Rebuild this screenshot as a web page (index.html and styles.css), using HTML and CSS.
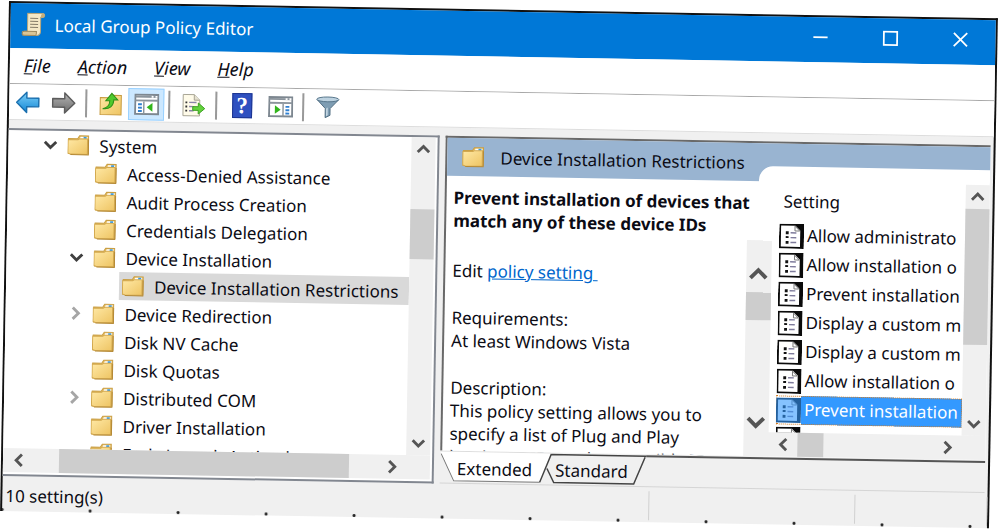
FILE: index.html
```html
<!DOCTYPE html>
<html lang="en">
<head>
  <meta charset="UTF-8" />
  <meta name="viewport" content="width=device-width, initial-scale=1.0"/>
  <title>Local Group Policy Editor</title>
  <link rel="stylesheet" href="styles.css">
</head>
<body>
  <svg class="sprite" aria-hidden="true">
    <defs>
      <linearGradient id="g-folder" x1="0" y1="0" x2="1" y2="1">
        <stop offset="0" stop-color="#ffe9a6"/><stop offset="1" stop-color="#eec463"/>
      </linearGradient>
      <linearGradient id="g-blue" x1="0" y1="0" x2="0" y2="1">
        <stop offset="0" stop-color="#7fd0f8"/><stop offset="1" stop-color="#1287d6"/>
      </linearGradient>
      <linearGradient id="g-gray" x1="0" y1="0" x2="0" y2="1">
        <stop offset="0" stop-color="#b5b5b5"/><stop offset="1" stop-color="#6a6a6a"/>
      </linearGradient>
    </defs>
    <symbol id="folder" viewBox="0 0 22 22">
      <path d="M1 4.5h9l2-3h9v18H1z" fill="#e6bd62" stroke="#c99f45"/>
      <path d="M13 2.500h7v2.500h-8z" fill="#fff"/>
      <path d="M16 2.500h3v2h-3z" fill="#3c9be0"/>
      <path d="M.5 5.500h10l1.500-1H20V20H3L.5 19z" fill="url(#g-folder)" stroke="#d3a94f"/>
      <path d="M3 20.500h18V5" fill="none" stroke="#b58a37"/>
    </symbol>
    <symbol id="arrow" viewBox="0 0 26 24">
      <path d="M1.500 12L12 1.500v6h12.500v9H12v6z" stroke-width="1.500" stroke-linejoin="round"/>
    </symbol>
    <symbol id="chev" viewBox="0 0 14 14">
      <path d="M2 4.500l5 5 5-5" fill="none" stroke="currentColor" stroke-width="2.500"/>
    </symbol>
    <symbol id="policy" viewBox="0 0 26 26">
      <path d="M0 0h26v26H0z" fill="#0a0a0a"/>
      <path d="M2 2h15l5 5v17H2z" fill="#fff"/>
      <path d="M16.500 2.500v5h5z" fill="#fff" stroke="#777"/>
      <path d="M7 8h3v3H7zM7 13h3v2H7zM7 18h3v3H7z" fill="#111"/>
      <path d="M12 9.500h6M12 14.500h6M12 19.500h6" stroke="#7f7c9c" stroke-width="1.500"/>
    </symbol>
  </svg>

  <main class="window">
    <header class="titlebar">
      <svg class="app-icon" viewBox="0 0 24 24" aria-hidden="true">
        <path d="M6 1h15c3 0 2 4 0 4h-2v14c0 3-2 4-4 4H3c-3 0-3-4 0-4h3z" fill="#f4e8c6" stroke="#b9a77c"/>
        <path d="M3 19h12c0 2 0 4-1 4H3c-3 0-3-4 0-4z" fill="#d9c596" stroke="#9c8a60"/>
        <path d="M19 5c0-2 1-4 2-4 3 0 2 4 0 4z" fill="#c3ae7c"/>
        <path d="M8.500 6h8M8.500 9h8M8.500 12h8M8.500 15h8" stroke="#857c68"/>
      </svg>
      <h1>Local Group Policy Editor</h1>
      <button class="win-btn" aria-label="Minimize"><svg viewBox="0 0 18 18"><path d="M1 9h16"/></svg></button>
      <button class="win-btn" aria-label="Maximize"><svg viewBox="0 0 18 18"><path d="M1.500 1.500h15v15h-15z"/></svg></button>
      <button class="win-btn" aria-label="Close"><svg viewBox="0 0 18 18"><path d="M1.500 1.500l15 15M16.500 1.500l-15 15"/></svg></button>
    </header>

    <nav class="menubar">
      <button><u>F</u>ile</button>
      <button><u>A</u>ction</button>
      <button><u>V</u>iew</button>
      <button><u>H</u>elp</button>
    </nav>

    <div class="toolbar">
      <button aria-label="Back"><svg class="back"><use href="#arrow"/></svg></button>
      <button aria-label="Forward"><svg class="forward"><use href="#arrow"/></svg></button>
      <span class="sep"></span>
      <button aria-label="Up one level">
        <svg viewBox="0 0 24 24">
          <path d="M1.500 6h9l2-2.500h10V23h-21z" fill="url(#g-folder)" stroke="#c79b40"/>
          <path d="M4 17c5-1 7-4 7-8H7l6-7.500L19 8h-4c0 6-4 10-11 9z" fill="#4fc92c" stroke="#2f8f18"/>
        </svg>
      </button>
      <button class="on" aria-label="Show console tree">
        <svg viewBox="0 0 26 24">
          <path d="M1 2h24v20H1z" fill="#fff" stroke="#7d8790" stroke-width="2"/>
          <path d="M1 4h24M1 8h24" stroke="#8b949c" stroke-width="2"/>
          <path d="M18 4h2M22 4h2" stroke="#fff" stroke-width="2"/>
          <path d="M10 9v13" stroke="#8b949c" stroke-width="1.500"/>
          <path d="M4 12h4M4 15.500h4M4 19h4" stroke="#2f7fd0" stroke-width="2"/>
          <path d="M19 10.500v9L13 15z" fill="#32b51c"/>
        </svg>
      </button>
      <span class="sep"></span>
      <button aria-label="Export list">
        <svg viewBox="0 0 26 26">
          <path d="M1.500 1.500h12l6 6v17h-18z" fill="#fffbe9" stroke="#a39f8f"/>
          <path d="M13.500 1.500v6h6" fill="#e6e2d0" stroke="#a39f8f"/>
          <path d="M4 10h2M4 14.500h2M4 19h2" stroke="#333" stroke-width="2"/>
          <path d="M8 10h8M8 14.500h5M8 19h5" stroke="#8a84a8" stroke-width="1.500"/>
          <path d="M12 14.500h6v-4l7 6-7 6v-4h-6z" fill="#62d13c" stroke="#369c1b"/>
        </svg>
      </button>
      <span class="sep"></span>
      <button class="help" aria-label="Help">?</button>
      <button aria-label="Show action pane">
        <svg viewBox="0 0 26 24">
          <path d="M1 2h24v20H1z" fill="#fff" stroke="#7d8790" stroke-width="2"/>
          <path d="M1 4h24M1 8h24" stroke="#8b949c" stroke-width="2"/>
          <path d="M18 4h2M22 4h2" stroke="#fff" stroke-width="2"/>
          <path d="M15.500 9v13" stroke="#8b949c" stroke-width="1.500"/>
          <path d="M18 12h4M18 15.500h4M18 19h4" stroke="#2f7fd0" stroke-width="2"/>
          <path d="M7 10.500v9l6-4.500z" fill="#32b51c"/>
        </svg>
      </button>
      <span class="sep"></span>
      <button aria-label="Filter">
        <svg viewBox="0 0 26 24">
          <path d="M2 4l8.500 9v9.500l5-2.500v-7L24 4z" fill="#7e9db3" stroke="#4e6b80"/>
          <path d="M11.500 13v8l1.500-1v-8z" fill="#cfe0ea"/>
          <ellipse cx="13" cy="3.500" rx="11.500" ry="2.500" fill="#bdd2e0" stroke="#557489"/>
        </svg>
      </button>
    </div>

    <div class="panes">
      <section class="tree-pane">
        <ul class="tree">
          <li><svg class="chev open"><use href="#chev"/></svg><svg class="folder"><use href="#folder"/></svg><span>System</span></li>
          <li class="l2"><svg class="folder"><use href="#folder"/></svg><span>Access-Denied Assistance</span></li>
          <li class="l2"><svg class="folder"><use href="#folder"/></svg><span>Audit Process Creation</span></li>
          <li class="l2"><svg class="folder"><use href="#folder"/></svg><span>Credentials Delegation</span></li>
          <li class="l2"><svg class="chev open"><use href="#chev"/></svg><svg class="folder"><use href="#folder"/></svg><span>Device Installation</span></li>
          <li class="l3"><div class="current"><svg class="folder"><use href="#folder"/></svg><span>Device Installation Restrictions</span></div></li>
          <li class="l2"><svg class="chev"><use href="#chev"/></svg><svg class="folder"><use href="#folder"/></svg><span>Device Redirection</span></li>
          <li class="l2"><svg class="folder"><use href="#folder"/></svg><span>Disk NV Cache</span></li>
          <li class="l2"><svg class="folder"><use href="#folder"/></svg><span>Disk Quotas</span></li>
          <li class="l2"><svg class="chev"><use href="#chev"/></svg><svg class="folder"><use href="#folder"/></svg><span>Distributed COM</span></li>
          <li class="l2"><svg class="folder"><use href="#folder"/></svg><span>Driver Installation</span></li>
          <li class="l2"><svg class="folder"><use href="#folder"/></svg><span>Early Launch Antimal</span></li>
        </ul>
        <div class="vbar tree-v">
          <button class="up" aria-label="Scroll up"><svg><use href="#chev"/></svg></button>
          <span class="thumb"></span>
          <button class="down" aria-label="Scroll down"><svg><use href="#chev"/></svg></button>
        </div>
        <div class="hbar tree-h">
          <button class="left" aria-label="Scroll left"><svg><use href="#chev"/></svg></button>
          <span class="thumb"></span>
          <button class="right" aria-label="Scroll right"><svg><use href="#chev"/></svg></button>
        </div>
      </section>

      <section class="detail">
        <div class="detail-view">
          <div class="detail-head">
            <svg class="folder"><use href="#folder"/></svg>
            <h2>Device Installation Restrictions</h2>
          </div>
          <div class="detail-body">
            <article class="desc">
              <h3>Prevent installation of devices that match any of these device IDs</h3>
              <p>Edit <a href="#">policy setting&nbsp;</a></p>
              <p>Requirements:<br>At least Windows Vista</p>
              <p>Description:<br>This policy setting allows you to specify a list of Plug and Play hardware IDs and compatible IDs</p>
            </article>
            <div class="vbar desc-v">
              <button class="up" aria-label="Scroll up"><svg><use href="#chev"/></svg></button>
              <span class="thumb"></span>
              <button class="down" aria-label="Scroll down"><svg><use href="#chev"/></svg></button>
            </div>
            <div class="list-box">
              <div class="list">
                <table>
                  <thead><tr><th>Setting</th></tr></thead>
                  <tbody>
                    <tr><td><svg><use href="#policy"/></svg><span>Allow administrato</span></td></tr>
                    <tr><td><svg><use href="#policy"/></svg><span>Allow installation o</span></td></tr>
                    <tr><td><svg><use href="#policy"/></svg><span>Prevent installation</span></td></tr>
                    <tr><td><svg><use href="#policy"/></svg><span>Display a custom m</span></td></tr>
                    <tr><td><svg><use href="#policy"/></svg><span>Display a custom m</span></td></tr>
                    <tr><td><svg><use href="#policy"/></svg><span>Allow installation o</span></td></tr>
                    <tr class="selected"><td><i><svg><use href="#policy"/></svg></i><span>Prevent installation</span></td></tr>
                    <tr><td><svg><use href="#policy"/></svg></td></tr>
                  </tbody>
                </table>
              </div>
              <div class="vbar list-v">
                <button class="up" aria-label="Scroll up"><svg><use href="#chev"/></svg></button>
                <span class="thumb"></span>
                <button class="down" aria-label="Scroll down"><svg><use href="#chev"/></svg></button>
              </div>
              <div class="hbar list-h">
                <button class="left" aria-label="Scroll left"><svg><use href="#chev"/></svg></button>
                <span class="thumb"></span>
                <button class="right" aria-label="Scroll right"><svg><use href="#chev"/></svg></button>
              </div>
            </div>
          </div>
        </div>
        <div class="tabs">
          <svg class="tab-shape" viewBox="0 0 206 32" aria-hidden="true">
            <path d="M0 0h112l-11 30H14L1 3z" fill="#fff"/>
            <path d="M0 .5h111" stroke="#ddd"/>
            <path d="M1 3l13 27h86" fill="none" stroke="#777"/>
            <path d="M100 30L111 2h95M107 16l7 14h80L205 3" fill="none" stroke="#444" stroke-width="1.500"/>
          </svg>
          <div class="tab-labels">
            <button>Extended</button>
            <button>Standard</button>
          </div>
          <span class="tab-line"></span>
        </div>
      </section>
    </div>

    <footer class="status">
      <span class="count">10 setting(s)</span>
      <span class="cell"></span>
      <span class="cell last"></span>
    </footer>
  </main>
</body>
</html>
```
FILE: styles.css
```css
* { box-sizing: border-box; }
body { display: flow-root; min-height: 100vh; margin: 0; background: #fff; color: #0b0b14; font-family: "Noto Sans", "Open Sans", sans-serif; font-size: 17px; overflow: hidden; }
button { border: 0; padding: 0; background: none; color: inherit; font: inherit; }
h1, h2, h3, p, ul { margin: 0; padding: 0; font-weight: normal; }
h1, h2 { font-size: 17px; }
.sprite { position: absolute; width: 0; height: 0; }

/* the whole window sits on the page with a slight tilt */
.window {
  display: flex;
  flex-direction: column;
  width: calc(100% - 11px);
  height: calc(100vh - 20px);
  margin: 1px 0 0 9px;
  border: 2px solid #111;
  border-bottom: 0;
  background: #f0f0f0;
  transform: rotate(1deg);
  transform-origin: 0 0;
}

.titlebar { display: flex; align-items: center; flex: 0 0 45px; background: #0078d7; color: #fff; padding: 0 0 3px 11px; }
.app-icon { width: 24px; height: 24px; margin-right: 9px; }
.titlebar h1 { flex: 1; }
.win-btn { width: 70px; height: 42px; }
.win-btn svg { width: 16px; height: 16px; fill: none; stroke: #fff; stroke-width: 2; }

.menubar { display: flex; gap: 27px; flex: 0 0 36px; align-items: center; padding: 0 0 2px 14px; background: #fff; border-bottom: 1px solid #a8a8a8; font-style: italic; font-size: 18px; }

.toolbar { display: flex; align-items: center; flex: 0 0 36px; background: #fff; border-bottom: 1px solid #ddd; }
.toolbar button { width: 36px; height: 32px; display: flex; align-items: center; justify-content: center; }
.toolbar svg { width: 25px; height: 24px; }
.toolbar .on { background: #cce8ff; border: 1px solid #99d1ff; }
.toolbar .sep { width: 2px; height: 28px; margin: 0 5px 0 4px; background: #999; }
.toolbar .help { width: 20px; height: 25px; margin: 0 10px; background: #2f50c0; border: 1px solid #1d3590; color: #fff; font-family: "Liberation Serif", serif; font-size: 23px; font-weight: bold; }
.back { fill: url(#g-blue); stroke: #1a6fae; }
.forward { fill: url(#g-gray); stroke: #5c5c5c; transform: scaleX(-1); }

.panes { display: grid; grid-template: minmax(0, 1fr) / 431px minmax(0, 1fr); gap: 6px; flex: 1; min-height: 0; padding: 8px 3px 0 0; }

.tree-pane { display: grid; grid-template: minmax(0, 1fr) 24px / minmax(0, 1fr) 24px; padding: 0 2px 2px 0; background: #fff; border: 2px solid #828790; border-left: 0; overflow: hidden; }
.tree { list-style: none; overflow: hidden; min-height: 0; }
.tree li { display: flex; align-items: center; height: 28px; padding-left: 59px; white-space: nowrap; }
.tree .l2 { padding-left: 87px; }
.tree .l3 { padding-left: 113px; }
.current { display: flex; align-items: center; flex: 1; height: 28px; padding-left: 3px; background: #d9d9d9; }
.folder { flex: none; width: 22px; height: 22px; margin-right: 10px; }
.chev { flex: none; width: 16px; height: 16px; margin-left: -25px; margin-right: 9px; color: #a6a6a6; transform: rotate(-90deg); }
.chev.open { color: #404040; transform: none; }

.vbar { display: flex; flex-direction: column; background: #f0f0f0; }
.hbar { display: flex; background: #f0f0f0; }
.vbar button, .hbar button { flex: none; width: 24px; height: 24px; display: flex; align-items: center; justify-content: center; color: #555; }
.vbar svg, .hbar svg { width: 16px; height: 16px; }
.up svg { transform: rotate(180deg); }
.left svg { transform: rotate(90deg); }
.right svg { transform: rotate(-90deg); }
.vbar .down { margin-top: auto; }
.hbar .right { margin-left: auto; }
.thumb { background: #cdcdcd; }
.tree-v .thumb { height: 50px; margin-top: 48px; }
.tree-h { grid-column: 1 / 3; padding-left: 4px; padding-right: 26px; }
.tree-h .thumb { width: 290px; margin-left: 28px; }

.detail { display: flex; flex-direction: column; min-width: 0; }
.detail-view { display: flex; flex-direction: column; flex: 1; min-height: 0; background: #fff; border: 2px solid #696969; border-right: 0; border-bottom: 0; }
.detail-head { display: flex; align-items: center; flex: 0 0 38px; padding-left: 14px; background: #99b4d1; }
.detail-head .folder { width: 24px; margin-right: 15px; }
.detail-body { display: flex; flex: 1; min-height: 0; }
.desc { flex: 1; min-width: 0; padding-top: 10px; padding-left: 7px; line-height: 23px; overflow: hidden; margin-right: -22px; }
.desc h3 { font-size: 17px; font-weight: bold; margin-bottom: 27px; }
.desc p { margin: 0 40px 24px 0; }
.desc a { color: #0066cc; }
.desc-v { position: relative; z-index: 1; flex: 0 0 25px; margin-top: 59px; padding-top: 22px; padding-bottom: 22px; }
.desc-v svg { width: 22px; height: 22px; }
.desc-v .thumb { height: 28px; margin-top: 6px; }

.list-box { display: grid; grid-template: minmax(0, 1fr) 24px / minmax(0, 1fr) 24px; flex: 0 0 231px; margin-top: -15px; margin-left: -14px; padding-left: 21px; border-radius: 14px 0 0 0; background: #fff; }
.list { overflow: hidden; min-height: 0; }
.list table { border-collapse: collapse; white-space: nowrap; width: 100%; table-layout: fixed; }
.list th { height: 55px; padding: 23px 0 0 4px; text-align: left; vertical-align: top; font-weight: normal; }
.list td { padding: 0; height: 29px; overflow: hidden; }
.list td svg { width: 25px; height: 25px; }
.list td span { margin-left: 3px; }
.list td, .list td svg { vertical-align: middle; }
.selected td { background: linear-gradient(to right, #fff 25px, #3399ff 25px); color: #fff; outline: 1px dotted #d27a20; outline-offset: -1px; }
.selected i { display: inline-block; position: relative; width: 25px; line-height: 0; vertical-align: middle; }
.selected i::after { content: ""; position: absolute; inset: 0; background: rgba(51, 153, 255, 0.6); }
.list-v { margin-top: 15px; }
.list-v .thumb { height: 136px; }
.list-h { grid-column: 1 / 3; margin-left: -8px; padding-left: 4px; padding-right: 26px; }
.list-h .thumb { width: 26px; margin-left: 2px; }

.tabs { display: grid; grid-template-columns: 206px 1fr; flex: 0 0 32px; border-bottom: 1px solid #d5d5d5; }
.tab-shape { grid-area: 1 / 1; width: 206px; height: 32px; }
.tab-labels { grid-area: 1 / 1; display: flex; align-items: center; gap: 23px; padding-top: 3px; padding-left: 17px; line-height: 24px; }
.tab-line { height: 3px; border-bottom: 2px solid #555; }

.status { display: flex; flex: 0 0 35px; padding: 4px 0 2px 3px; background: radial-gradient(circle, #222 1px, transparent 2px) -44px 100% / 88px 3px repeat-x; }
.count { flex: 1; padding-top: 4px; line-height: 24px; }
.cell { flex: 0 0 206px; border-left: 1px solid #d0d0d0; }
.cell.last { flex-basis: 133px; border-right: 1px solid #d0d0d0; }
```
